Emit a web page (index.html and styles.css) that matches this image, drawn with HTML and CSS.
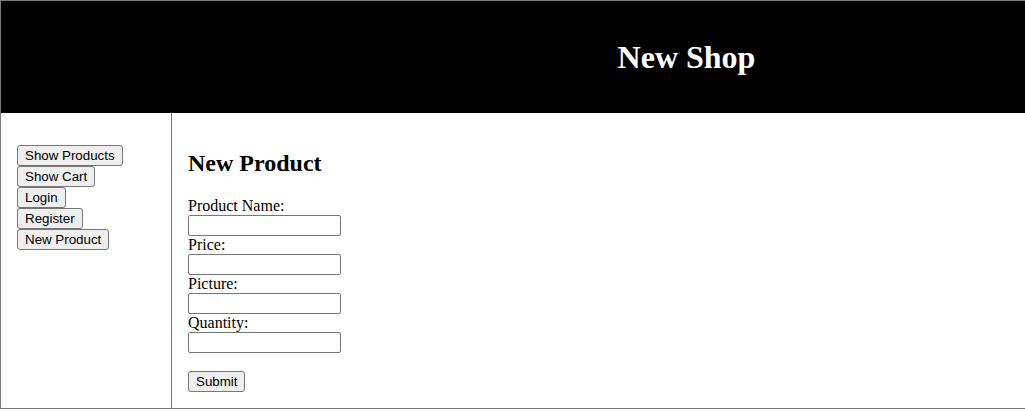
FILE: index.html
```html
<!DOCTYPE html>
<html>
<head>
<meta charset="utf-8">
<title>New Shop</title>
<link rel="stylesheet" href="styles.css">
</head>
<body>
<div class="app">
  <header class="header">
    <h1 class="title">New Shop</h1>
  </header>
  <div class="body">
    <nav class="sidebar">
      <div class="nav">
        <button class="btn">Show Products</button><br>
        <button class="btn">Show Cart</button><br>
        <button class="btn">Login</button><br>
        <button class="btn">Register</button><br>
        <button class="btn">New Product</button>
      </div>
    </nav>
    <main class="main">
      <h2 class="heading">New Product</h2>
      <form class="form">
        <label class="label">Product Name:</label><br>
        <input class="field" type="text"><br>
        <label class="label">Price:</label><br>
        <input class="field" type="text"><br>
        <label class="label">Picture:</label><br>
        <input class="field" type="text"><br>
        <label class="label">Quantity:</label><br>
        <input class="field" type="text"><br>
        <br>
        <button class="btn" type="button">Submit</button>
      </form>
    </main>
  </div>
</div>
</body>
</html>
```
FILE: styles.css
```css
html, body {
  margin: 0;
  padding: 0;
  background: #fff;
  overflow: hidden;
}
body {
  font-family: "Liberation Serif", "Times New Roman", serif;
  font-size: 16px;
  color: #000;
}
.app {
  width: 1024px;
  height: 407px;
  border-top: 1px solid #7a7a7a;
  border-left: 1px solid #7a7a7a;
  border-bottom: 1px solid #7a7a7a;
  display: flex;
  flex-direction: column;
}
.header {
  height: 112px;
  background: #000;
  color: #fff;
  display: flex;
  align-items: center;
  justify-content: center;
  padding-left: 347px;
  flex: none;
}
.title {
  margin: 0;
  font-size: 32px;
  font-weight: bold;
}
.body {
  flex: 1;
  display: flex;
}
.sidebar {
  width: 154px;
  padding: 32px 0 0 16px;
  border-right: 1px solid #7a7a7a;
  flex: none;
}
.nav {
  line-height: 0;
}
.btn {
  font-family: "Liberation Sans", Arial, sans-serif;
  font-size: 13.333px;
  line-height: normal;
  padding: 1px 7px;
  margin: 0;
  height: 21px;
  background: #efefef;
  color: #000;
  border: 1px solid #767676;
  border-radius: 3px;
}
.main {
  flex: 1;
  padding: 16px;
}
.heading {
  font-size: 24px;
  font-weight: bold;
  margin: 21px 0 20px;
}
.form {
  margin: 0;
  line-height: 18px;
}
.field {
  width: 153px;
  height: 21px;
  box-sizing: border-box;
  margin: 0;
  padding: 1px 2px;
  border: 1px solid #767676;
  border-radius: 2px;
  font-family: "Liberation Sans", Arial, sans-serif;
  font-size: 13.333px;
  vertical-align: top;
}
```
